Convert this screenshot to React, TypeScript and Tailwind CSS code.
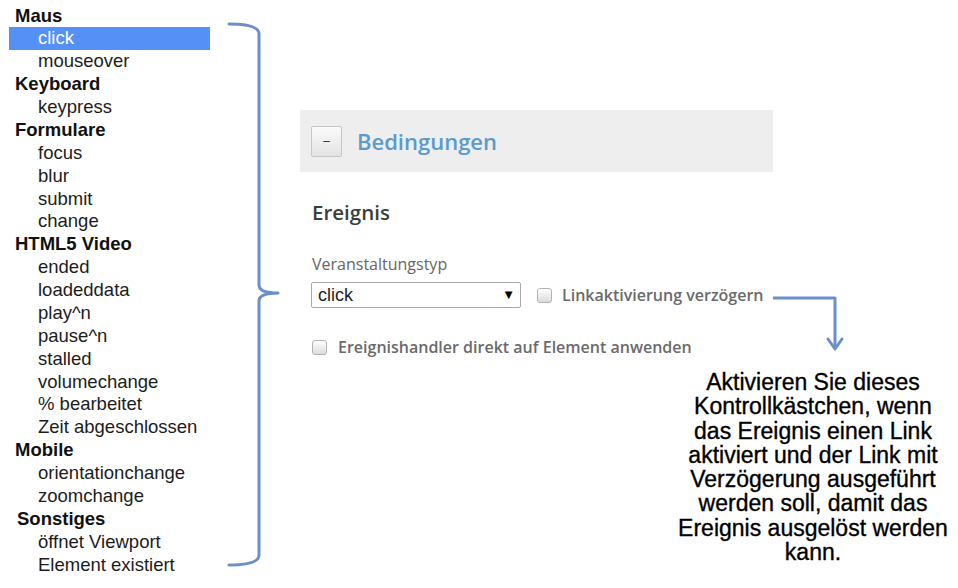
import React from 'react';

type Row = { label: string; head?: boolean; selected?: boolean; shift?: boolean };

const rows: Row[] = [
  { label: 'Maus', head: true },
  { label: 'click', selected: true },
  { label: 'mouseover' },
  { label: 'Keyboard', head: true },
  { label: 'keypress' },
  { label: 'Formulare', head: true },
  { label: 'focus' },
  { label: 'blur' },
  { label: 'submit' },
  { label: 'change' },
  { label: 'HTML5 Video', head: true },
  { label: 'ended' },
  { label: 'loadeddata' },
  { label: 'play^n' },
  { label: 'pause^n' },
  { label: 'stalled' },
  { label: 'volumechange' },
  { label: '% bearbeitet' },
  { label: 'Zeit abgeschlossen' },
  { label: 'Mobile', head: true },
  { label: 'orientationchange' },
  { label: 'zoomchange' },
  { label: 'Sonstiges', head: true, shift: true },
  { label: 'öffnet Viewport' },
  { label: 'Element existiert' },
];

const calloutLines = [
  'Aktivieren Sie dieses',
  'Kontrollkästchen, wenn',
  'das Ereignis einen Link',
  'aktiviert und der Link mit',
  'Verzögerung ausgeführt',
  'werden soll, damit das',
  'Ereignis ausgelöst werden',
  'kann.',
];

const Checkbox: React.FC = () => (
  <span className="inline-block h-[15px] w-[15px] shrink-0 rounded-[3px] border border-[#b3b3b3] bg-linear-to-b from-white to-[#dcdcdc]" />
);

const EventList: React.FC = () => (
  <ul className="w-[210px] shrink-0 pl-[9px] pt-[4px] font-['Liberation_Sans',Arial,sans-serif] text-[18.5px]">
    {rows.map((r) => (
      <li
        key={r.label}
        className={
          'flex h-[22.875px] items-center whitespace-nowrap ' +
          (r.selected ? 'bg-[#5590f6] text-white ' : 'text-[#1c1c1c] ') +
          (r.head ? 'font-bold text-[#111] ' : '') +
          (r.head ? (r.shift ? 'pl-[8px]' : 'pl-[6px]') : 'pl-[29px]')
        }
      >
        {r.label}
      </li>
    ))}
  </ul>
);

const Bracket: React.FC = () => (
  <div className="w-[80px] shrink-0">
    <svg width="80" height="588" viewBox="0 0 80 588" fill="none">
      <path
        d="M19 24 Q49 24 49 34 L49 285 Q49 293 68 293 Q49 293 49 301 L49 555 Q49 565 19 565"
        stroke="#6a8fc9"
        strokeWidth="3"
        strokeLinecap="round"
        strokeLinejoin="round"
      />
    </svg>
  </div>
);

export default function App() {
  return (
    <div className="relative flex h-[588px] w-[958px] overflow-hidden bg-white">
      <EventList />
      <Bracket />

      <div className="flex flex-1 flex-col pt-[110px] font-['Open_Sans',sans-serif]">
        <div className="ml-[10px] flex h-[62px] w-[473px] items-center bg-[#eeeeee] pl-[11px]">
          <button className="flex h-[31px] w-[31px] items-center justify-center rounded-[2px] border border-[#c6c6c6] bg-linear-to-b from-[#fbfbfb] to-[#e3e3e3] font-['Liberation_Sans',Arial,sans-serif] text-[12px] text-[#333]">
            –
          </button>
          <span className="ml-[15px] text-[22px] font-semibold text-[#5a9bcb]">Bedingungen</span>
        </div>

        <div className="ml-[22px] mt-[26px] h-[28px] text-[20.5px] font-semibold leading-[28px] text-[#3d3d3d]">
          Ereignis
        </div>

        <div className="ml-[22px] mt-[28px] h-[20px] text-[16px] leading-[20px] text-[#666]">
          Veranstaltungstyp
        </div>

        <div className="ml-[21px] mt-[8px] flex items-center">
          <div className="flex h-[26px] w-[210px] items-center justify-between rounded-[2px] border border-[#a9a9a9] bg-white pl-[6px] pr-[5px] font-['Liberation_Sans',Arial,sans-serif] text-[18px] text-[#1e1e1e]">
            <span>click</span>
            <span className="text-[13px] text-black">▼</span>
          </div>
          <div className="ml-[16px] flex items-center gap-[10px]">
            <Checkbox />
            <span className="text-[16px] font-semibold text-[#6a6a6a]">Linkaktivierung verzögern</span>
          </div>
        </div>

        <div className="ml-[22px] mt-[29px] flex h-[20px] items-center gap-[11px]">
          <Checkbox />
          <span className="text-[16px] font-semibold text-[#6a6a6a]">
            Ereignishandler direkt auf Element anwenden
          </span>
        </div>

        <div className="mt-[13px] w-[290px] self-end text-center font-['Liberation_Sans',Arial,sans-serif] text-[23px] leading-[24.3px] text-black [-webkit-text-stroke:0.35px_black]">
          {calloutLines.map((l) => (
            <div key={l}>{l}</div>
          ))}
        </div>
      </div>

      <svg
        className="pointer-events-none absolute left-0 top-0"
        width="958"
        height="588"
        viewBox="0 0 958 588"
        fill="none"
      >
        <path d="M773 298 L835 298 L835 348" stroke="#6a8fc9" strokeWidth="3" strokeLinejoin="round" />
        <path d="M828 339 L835 349 L842 339" stroke="#6a8fc9" strokeWidth="3" strokeLinecap="round" strokeLinejoin="round" />
      </svg>
    </div>
  );
}
